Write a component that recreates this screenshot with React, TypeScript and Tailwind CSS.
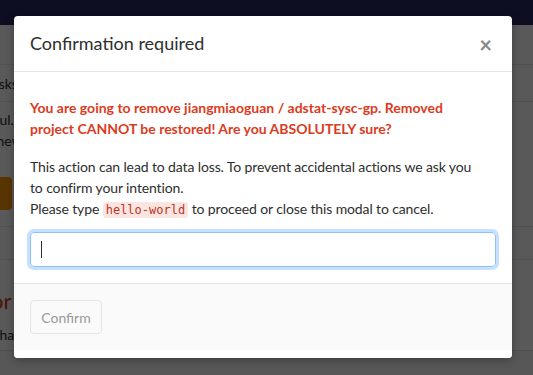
import React from "react";

const BackgroundPage: React.FC = () => {
  return (
    <div className="h-[375px] w-[533px] overflow-hidden bg-[#fafafa] text-[14px] text-[#2e2e2e]">
      <div className="h-[25px] bg-[#292961]" />
      <div className="h-[40px] border-b border-[#e5e5e5] bg-white" />
      <div className="flex h-[37px] items-center border-b border-[#e5e5e5] bg-white">
        <span className="-ml-[15px]">Tasks</span>
      </div>
      <div className="flex h-[125px] flex-col border-b border-[#e5e5e5] bg-white pt-[7px]">
        <span className="-ml-[52px] leading-[21px]">successful.</span>
        <span className="-ml-[14px] leading-[21px]">a new</span>
        <div className="mt-[26px] h-[33px] w-[12px] rounded-r-[4px] bg-[#fc9403]" />
      </div>
      <div className="h-[33px] border-b border-[#e5e5e5] bg-white" />
      <div className="flex h-[91px] flex-col border-b border-[#e5e5e5] bg-white pt-[28px]">
        <span className="-ml-[37px] text-[22px] leading-[26px] text-[#db3b21]">Error</span>
        <span className="-ml-[8px] mt-[10px] leading-[21px]">Sharing</span>
      </div>
    </div>
  );
};

const ConfirmationModal: React.FC = () => {
  return (
    <div className="w-[498px] overflow-hidden rounded-[4px] bg-white shadow-[0_2px_8px_rgba(0,0,0,0.3)]">
      <div className="flex h-[56px] items-center justify-between border-b border-[#e5e5e5] pl-4 pr-[20px]">
        <h4 className="text-[18px] text-[#2e2e2e]">Confirmation required</h4>
        <button className="mt-[3px] text-[22px] font-bold leading-none text-[#888]">×</button>
      </div>

      <div className="px-4 pb-4 pt-[25px]">
        <p className="mb-[17px] max-w-[440px] text-[14px] font-bold leading-[21px] text-[#db3b21]">
          You are going to remove jiangmiaoguan / adstat-sysc-gp. Removed project CANNOT be
          restored! Are you ABSOLUTELY sure?
        </p>
        <p className="max-w-[448px] text-[14px] leading-[21px] tracking-[-0.12px] text-[#2e2e2e]">
          This action can lead to data loss. To prevent accidental actions we ask you to
          confirm your intention.
          <br />
          Please type{" "}
          <code className="rounded-[3px] bg-[#fbe5e1] px-[3px] py-[1px] font-['DejaVu_Sans_Mono',monospace] text-[12px] tracking-normal text-[#c0341d]">
            hello-world
          </code>{" "}
          to proceed or close this modal to cancel.
        </p>
        <div className="mt-[11px] flex h-[35px] items-center rounded-[4px] border border-[#8ec2f5] px-[10px] shadow-[0_0_0_3px_rgba(150,200,255,0.55)]">
          <span className="h-[17px] w-px bg-[#2e2e2e]" />
        </div>
      </div>

      <div className="border-t border-[#e5e5e5] bg-[#fafafa] p-4">
        <button
          disabled
          className="h-[34px] w-[72px] rounded-[4px] border border-[#e5e5e5] bg-[#fafafa] text-[14px] text-[#999]"
        >
          Confirm
        </button>
      </div>
      <div className="h-[8px] bg-white" />
    </div>
  );
};

const App: React.FC = () => {
  return (
    <div className="relative h-[375px] w-[533px] overflow-hidden font-['Lato',sans-serif]">
      <BackgroundPage />
      <div className="absolute inset-0 flex items-start bg-black/65 pl-[14px] pt-4">
        <ConfirmationModal />
      </div>
    </div>
  );
};

export default App;
